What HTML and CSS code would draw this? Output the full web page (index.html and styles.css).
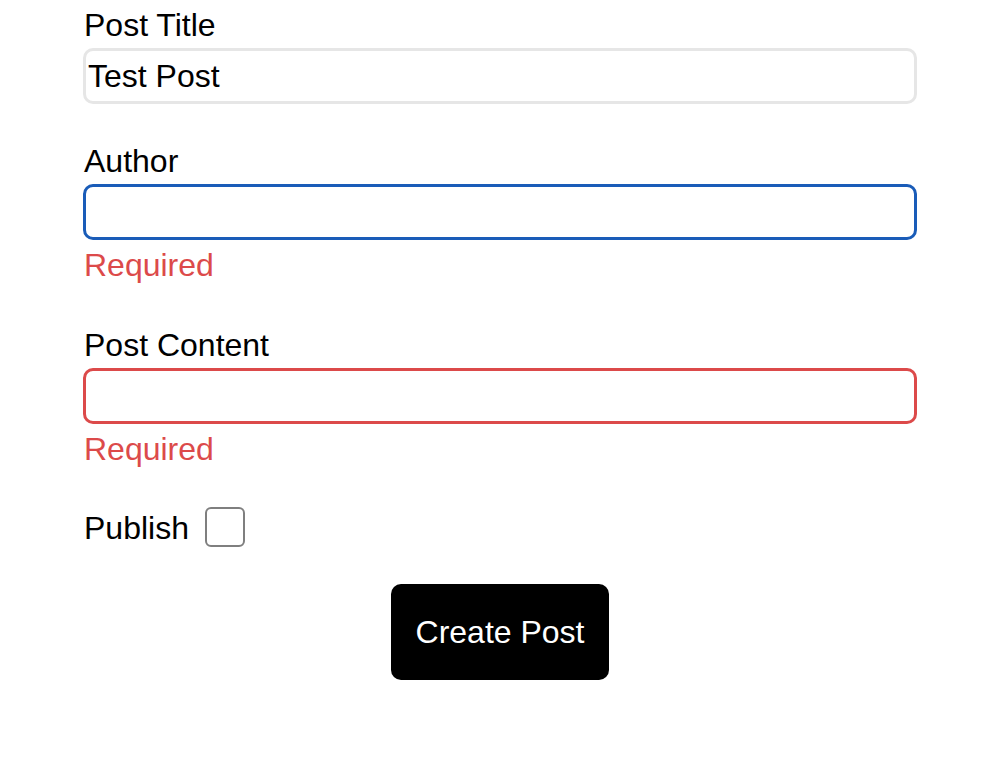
FILE: index.html
```html
<!DOCTYPE html>
<html lang="en">
<head>
<meta charset="utf-8">
<title>Create Post</title>
<link rel="stylesheet" href="styles.css">
</head>
<body>
<form class="post-form">
  <div class="field">
    <label class="label label-first" for="title">Post Title</label>
    <input class="input" id="title" type="text" value="Test Post">
  </div>
  <div class="field">
    <label class="label" for="author">Author</label>
    <input class="input input-focus" id="author" type="text">
    <div class="error">Required</div>
  </div>
  <div class="field">
    <label class="label" for="content">Post Content</label>
    <input class="input input-error" id="content" type="text">
    <div class="error">Required</div>
  </div>
  <div class="publish-row">
    <label class="label label-publish" for="publish">Publish</label>
    <input class="checkbox" id="publish" type="checkbox">
  </div>
  <button class="submit" type="button">Create Post</button>
</form>
</body>
</html>
```

FILE: styles.css
```css
html, body {
  margin: 0;
  padding: 0;
  background: #ffffff;
}

body {
  font-family: "Liberation Sans", Arial, sans-serif;
  font-size: 32px;
  color: #000000;
}

.post-form {
  display: flex;
  flex-direction: column;
  width: 834px;
  margin: 0 0 0 83px;
  padding-top: 5px;
}

.field {
  display: flex;
  flex-direction: column;
  margin-bottom: 38px;
}

.field:nth-child(3) {
  margin-bottom: 35px;
}

.label {
  display: block;
  box-sizing: border-box;
  line-height: 37px;
  height: 37px;
  padding-top: 1px;
  padding-left: 1px;
}

.label-first {
  padding-top: 2px;
}

.label-publish {
  padding-top: 3px;
  height: 40px;
}

.input {
  box-sizing: border-box;
  height: 56px;
  width: 100%;
  margin-top: 5px;
  padding: 0 2px;
  border: 3px solid #e6e6e6;
  border-radius: 10px;
  font-family: "Liberation Sans", Arial, sans-serif;
  font-size: 32px;
  color: #000000;
  background: #ffffff;
  outline: none;
}

.field:first-child .input {
  margin-top: 6px;
}

.input-focus {
  border: 3px solid #1a5cb8;
}

.input-error {
  border: 3px solid #dc4a4a;
}

.error {
  box-sizing: border-box;
  margin-top: 6px;
  margin-bottom: 5px;
  line-height: 37px;
  height: 37px;
  padding-top: 1px;
  padding-left: 1px;
  color: #dc4a4a;
}

.publish-row {
  display: flex;
  align-items: center;
  height: 40px;
}

.checkbox {
  appearance: none;
  -webkit-appearance: none;
  box-sizing: border-box;
  width: 40px;
  height: 40px;
  margin: 0 0 0 16px;
  border: 2px solid #7f7f7f;
  border-radius: 6px;
  background: #ffffff;
}

.submit {
  align-self: center;
  margin-top: 37px;
  width: 218px;
  height: 96px;
  padding: 0;
  border: none;
  border-radius: 10px;
  background: #000000;
  color: #ffffff;
  font-family: "Liberation Sans", Arial, sans-serif;
  font-size: 32px;
  line-height: 37px;
}
```
